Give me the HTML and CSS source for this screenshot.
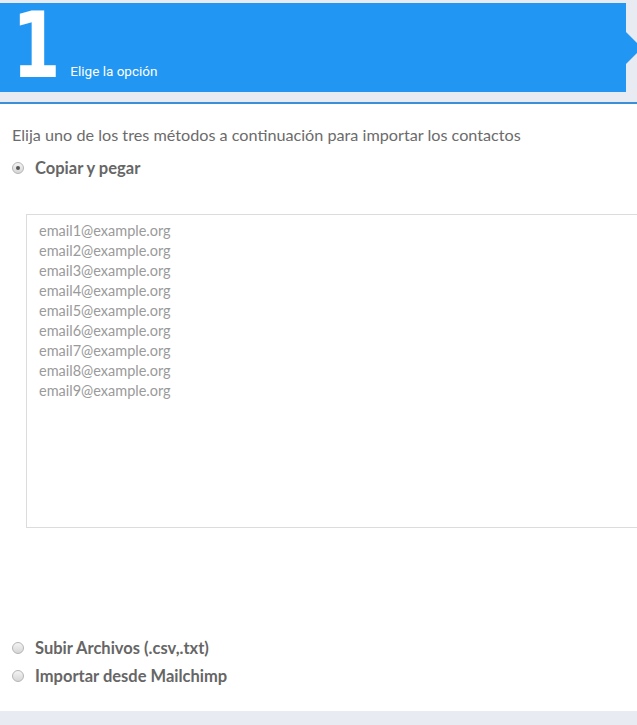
FILE: index.html
```html
<!DOCTYPE html>
<html lang="es">
<head>
<meta charset="UTF-8">
<meta name="viewport" content="width=device-width, initial-scale=1.0">
<title>Importar contactos</title>
<link rel="stylesheet" href="styles.css">
</head>
<body>

<div class="steps">
    <div class="step">
        <span class="step_num">1</span>
        <span class="step_label">Elige la opción</span>
    </div>
</div>
<div class="step_line"></div>

<div class="panel">
    <p class="intro">Elija uno de los tres métodos a continuación para importar los contactos</p>

    <label class="option">
        <span class="radio checked"></span>
        Copiar y pegar
    </label>

    <div class="paste_box">
        <div>email1@example.org</div>
        <div>email2@example.org</div>
        <div>email3@example.org</div>
        <div>email4@example.org</div>
        <div>email5@example.org</div>
        <div>email6@example.org</div>
        <div>email7@example.org</div>
        <div>email8@example.org</div>
        <div>email9@example.org</div>
    </div>

    <div class="other_options">
        <label class="option">
            <span class="radio"></span>
            Subir Archivos (.csv,.txt)
        </label>
        <label class="option">
            <span class="radio"></span>
            Importar desde Mailchimp
        </label>
    </div>
</div>

</body>
</html>
```
FILE: styles.css
```css
html, body {
    margin: 0;
    overflow: hidden;
}

body {
    background-color: #e8ecf2;
    font-family: "Lato", "Noto Sans", sans-serif;
    width: 637px;
    height: 725px;
}

.steps {
    padding-top: 3px;
}

.step {
    position: relative;
    width: 626px;
    height: 89px;
    background-color: #2196f3;
    display: flex;
    align-items: flex-end;
    box-sizing: border-box;
    padding: 0 0 14px 12px;
}

/* little arrow pointing to the next step */
.step::after {
    content: "";
    position: absolute;
    right: -16px;
    top: 29px;
    border-top: 16px solid transparent;
    border-bottom: 16px solid transparent;
    border-left: 16px solid #2196f3;
}

.step_num {
    font-family: "DejaVu Sans Condensed", "DejaVu Sans", sans-serif;
    font-stretch: condensed;
    font-weight: 700;
    font-size: 90px;
    line-height: 76px;
    color: white;
    margin-bottom: -6px;
    transform: scaleX(0.86);
    transform-origin: left bottom;
}

.step_label {
    font-family: "Roboto", sans-serif;
    font-size: 13.5px;
    color: white;
    margin-left: 2px;
    line-height: 13px;
}

.step_line {
    margin-top: 10px;
    height: 2px;
    background-color: #3a8fd8;
}

.panel {
    background-color: white;
    height: 607px;
    padding: 21px 0 0 12px;
    box-sizing: border-box;
    color: #666;
}

.intro {
    margin: 0;
    font-size: 16.2px;
    line-height: 20px;
    color: #6b6b6b;
}

.option {
    display: flex;
    align-items: center;
    gap: 11px;
    font-size: 16.5px;
    font-weight: 700;
    color: #666;
    line-height: 28px;
}

.panel > .option {
    margin-top: 9px;
}

.radio {
    width: 10px;
    height: 10px;
    flex-shrink: 0;
    border-radius: 50%;
    border: 1px solid #b5b5b5;
    background: linear-gradient(to bottom, #f4f4f4, #d6d6d6);
    position: relative;
}

.radio.checked::after {
    content: "";
    position: absolute;
    left: 3px;
    top: 3px;
    width: 4px;
    height: 4px;
    border-radius: 50%;
    background-color: #555;
}

.paste_box {
    margin: 32px 0 0 14px;
    width: 700px;
    height: 314px;
    box-sizing: border-box;
    border: 1px solid #dcdcdc;
    padding: 6px 12px;
    font-size: 14.5px;
    line-height: 20px;
    color: #9a9a9a;
}

.other_options {
    margin-top: 106px;
}
```
